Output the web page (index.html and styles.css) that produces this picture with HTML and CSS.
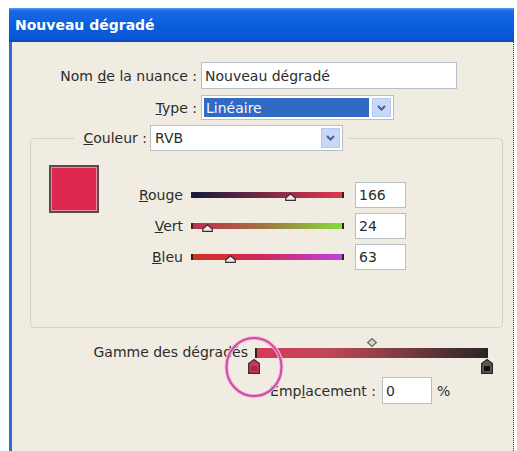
FILE: index.html
```html
<!DOCTYPE html>
<html lang="fr">
<head>
<meta charset="utf-8">
<title>Nouveau dégradé</title>
<link rel="stylesheet" href="styles.css">
</head>
<body>
<div class="window">
  <div class="titlebar"><span class="title">Nouveau dégradé</span></div>
  <div class="body">
    <div class="row row-name">
      <label class="lbl lbl-main">Nom <u>d</u>e la nuance :</label>
      <div class="textbox tb-name">Nouveau dégradé</div>
    </div>
    <div class="row row-type">
      <label class="lbl lbl-main"><u>T</u>ype :</label>
      <div class="select sel-type">
        <span class="sel-value selected">Linéaire</span>
        <span class="sel-btn"><svg width="9" height="6" viewBox="0 0 9 6"><path d="M1 1 L4.5 4.5 L8 1" fill="none" stroke="#4a5f8a" stroke-width="2"/></svg></span>
      </div>
    </div>
    <fieldset class="group">
      <legend class="group-legend">
        <label class="lbl lbl-color"><u>C</u>ouleur :</label>
        <div class="select sel-color">
          <span class="sel-value">RVB</span>
          <span class="sel-btn"><svg width="9" height="6" viewBox="0 0 9 6"><path d="M1 1 L4.5 4.5 L8 1" fill="none" stroke="#4a5f8a" stroke-width="2"/></svg></span>
        </div>
      </legend>
      <div class="color-body">
        <div class="swatch"></div>
        <div class="sliders">
          <div class="slider-row">
            <label class="lbl lbl-slider"><u>R</u>ouge</label>
            <div class="track track-r"><svg class="thumb" style="left:65.1%" width="11" height="8" viewBox="0 0 11 8"><path d="M5.5 0.7 L10.3 5 L10.3 7.4 L0.7 7.4 L0.7 5 Z" fill="#f4e8ea" stroke="#3a3030" stroke-width="1.2"/></svg></div>
            <div class="textbox tb-num">166</div>
          </div>
          <div class="slider-row">
            <label class="lbl lbl-slider"><u>V</u>ert</label>
            <div class="track track-g"><svg class="thumb" style="left:9.4%" width="11" height="8" viewBox="0 0 11 8"><path d="M5.5 0.7 L10.3 5 L10.3 7.4 L0.7 7.4 L0.7 5 Z" fill="#f4e8ea" stroke="#3a3030" stroke-width="1.2"/></svg></div>
            <div class="textbox tb-num">24</div>
          </div>
          <div class="slider-row">
            <label class="lbl lbl-slider"><u>B</u>leu</label>
            <div class="track track-b"><svg class="thumb" style="left:24.7%" width="11" height="8" viewBox="0 0 11 8"><path d="M5.5 0.7 L10.3 5 L10.3 7.4 L0.7 7.4 L0.7 5 Z" fill="#f4e8ea" stroke="#3a3030" stroke-width="1.2"/></svg></div>
            <div class="textbox tb-num">63</div>
          </div>
        </div>
      </div>
    </fieldset>
    <div class="gradient-row">
      <span class="lbl lbl-range">Gamme des dégradés</span>
      <div class="gradient-widget">
        <svg class="midpoint" width="10" height="9" viewBox="0 0 10 9"><path d="M5 0.6 L9.4 4.5 L5 8.4 L0.6 4.5 Z" fill="#d8d4cc" stroke="#6a6464" stroke-width="1.2"/></svg>
        <div class="gradient-bar"></div>
        <svg class="stop stop-left" width="12" height="15" viewBox="0 0 12 15"><path d="M6 0.6 L11.4 4.5 L11.4 14.4 L0.6 14.4 L0.6 4.5 Z" fill="#c83658" stroke="#3a2a2e" stroke-width="1.2"/><rect x="3" y="7" width="6" height="5" fill="#a52848"/></svg>
        <svg class="stop stop-right" width="12" height="15" viewBox="0 0 12 15"><path d="M6 0.6 L11.4 4.5 L11.4 14.4 L0.6 14.4 L0.6 4.5 Z" fill="#5a5656" stroke="#2a2626" stroke-width="1.2"/><rect x="3" y="7" width="6" height="5" fill="#111"/></svg>
        <svg class="highlight" width="60" height="62" viewBox="0 0 60 62"><ellipse cx="30" cy="31" rx="27.5" ry="29" fill="none" stroke="#f2b8dc" stroke-width="4"/><ellipse cx="30" cy="31" rx="27.5" ry="29" fill="none" stroke="#d24a9c" stroke-width="2"/></svg>
      </div>
    </div>
    <div class="row row-loc">
      <label class="lbl lbl-loc">Emp<u>l</u>acement :</label>
      <div class="textbox tb-loc">0</div>
      <span class="pct">%</span>
    </div>
  </div>
</div>
</body>
</html>
```
FILE: styles.css
```css
html, body {
  margin: 0;
  padding: 0;
  background: #ffffff;
  overflow: hidden;
}
body {
  font-family: "DejaVu Sans", Verdana, sans-serif;
  font-size: 14px;
  color: #2c2c2c;
}
.window {
  margin: 8px 0 0 9px;
  width: 505px;
}
.titlebar {
  height: 34px;
  box-sizing: border-box;
  padding-left: 6px;
  display: flex;
  align-items: center;
  background: linear-gradient(#5a9cf8 0, #1a6ae6 8%, #0a5ddc 50%, #0a58d6 88%, #0a4bb8 100%);
}
.title {
  color: #ffffff;
  font-weight: bold;
  font-size: 14px;
}
.body {
  height: 409px;
  box-sizing: border-box;
  background: #f0ece2;
  border-left: 3px solid #2f6fcf;
  border-right: 1px dotted #3a3a3a;
}
.row {
  display: flex;
  align-items: center;
}
.row-name {
  padding-top: 20px;
}
.row-type {
  margin-top: 6px;
}
.lbl {
  white-space: nowrap;
}
.lbl-main {
  width: 185px;
  text-align: right;
  margin-right: 4px;
}
.textbox {
  background: #ffffff;
  border: 1px solid #b7bec8;
  box-sizing: border-box;
  display: flex;
  align-items: center;
  padding-left: 3px;
}
.tb-name {
  width: 256px;
  height: 27px;
}
.select {
  display: flex;
  background: #ffffff;
  border: 1px solid #b7bec8;
  box-sizing: border-box;
  padding: 2px;
}
.sel-type {
  width: 193px;
  height: 25px;
}
.sel-value {
  flex: 1;
  display: flex;
  align-items: center;
  padding-left: 2px;
}
.selected {
  background: #316ac5;
  color: #f4f8ff;
}
.sel-btn {
  width: 19px;
  margin-left: 3px;
  box-sizing: border-box;
  background: #c9d8f8;
  border: 1px solid #b6c9f0;
  display: flex;
  align-items: center;
  justify-content: center;
}
.group {
  margin: 5px 0 0 18px;
  width: 473px;
  padding: 0;
  border: 1px solid #d6d2c4;
  border-radius: 4px;
  box-sizing: border-box;
  min-width: 0;
}
.group-legend {
  margin-left: 43px;
  padding: 0 6px 0 2px;
  display: flex;
  align-items: center;
}
.lbl-color {
  width: 71px;
  text-align: right;
  margin-right: 3px;
}
.sel-color {
  width: 193px;
  height: 26px;
}
.color-body {
  display: flex;
  align-items: flex-start;
  padding: 14px 0 57px 18px;
}
.swatch {
  width: 50px;
  height: 48px;
  box-sizing: border-box;
  border: 2px solid #5e4a4e;
  background: #de2850;
  box-shadow: inset 0 0 0 1px #ec8aa2;
}
.sliders {
  margin-top: 17px;
  display: flex;
  flex-direction: column;
  gap: 5px;
}
.slider-row {
  display: flex;
  align-items: center;
  height: 26px;
}
.lbl-slider {
  width: 92px;
  padding-right: 8px;
  box-sizing: border-box;
  text-align: right;
}
.track {
  position: relative;
  width: 153px;
  height: 6px;
  box-sizing: border-box;
  border-left: 2px solid #2a2222;
  border-right: 2px solid #2a2222;
}
.track-r {
  background: linear-gradient(to right, #141a3c, #e4384e);
}
.track-g {
  background: linear-gradient(to right, #c02c50, #a07840 50%, #86dc3c);
}
.track-b {
  background: linear-gradient(to right, #d23220, #d0285a 45%, #c240e0);
}
.thumb {
  position: absolute;
  top: 1px;
  margin-left: -5px;
}
.tb-num {
  width: 51px;
  height: 26px;
  margin-left: 11px;
}
.gradient-row {
  display: flex;
  align-items: flex-start;
  margin-top: 9px;
}
.lbl-range {
  width: 236px;
  text-align: right;
  margin-top: 7px;
  line-height: 16px;
}
.gradient-widget {
  position: relative;
  width: 242px;
  height: 38px;
  margin-left: 2px;
}
.gradient-bar {
  margin: 11px 0 0 5px;
  width: 233px;
  height: 10px;
  box-sizing: border-box;
  border-left: 2px solid #2a2222;
  border-right: 2px solid #2a2222;
  background: linear-gradient(to right, #d8385a, #c04858 30%, #8c4048 55%, #2b2626);
}
.midpoint {
  position: absolute;
  left: 117px;
  top: 1px;
}
.stop {
  position: absolute;
  top: 22px;
}
.stop-left {
  left: -2px;
}
.stop-right {
  left: 231px;
}
.highlight {
  position: absolute;
  left: -26px;
  top: -1px;
}
.row-loc {
  margin-top: 2px;
}
.lbl-loc {
  width: 364px;
  text-align: right;
  margin-right: 6px;
}
.tb-loc {
  width: 50px;
  height: 27px;
}
.pct {
  margin-left: 5px;
}
```
